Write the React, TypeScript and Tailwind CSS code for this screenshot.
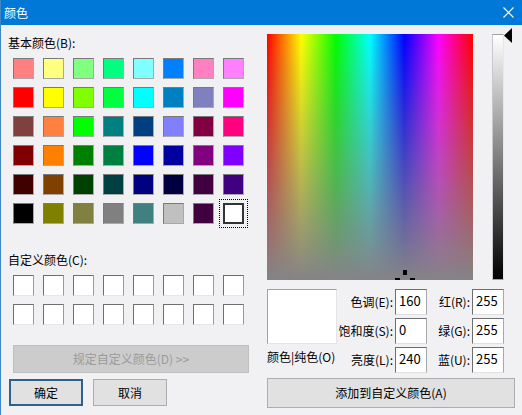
const basicColors = [
  "#ff8080", "#ffff80", "#80ff80", "#00ff80", "#80ffff", "#0080ff", "#ff80c0", "#ff80ff",
  "#ff0000", "#ffff00", "#80ff00", "#00ff40", "#00ffff", "#0080c0", "#8080c0", "#ff00ff",
  "#804040", "#ff8040", "#00ff00", "#008080", "#004080", "#8080ff", "#800040", "#ff0080",
  "#800000", "#ff8000", "#008000", "#008040", "#0000ff", "#0000a0", "#800080", "#8000ff",
  "#400000", "#804000", "#004000", "#004040", "#000080", "#000040", "#400040", "#400080",
  "#000000", "#808000", "#808040", "#808080", "#408080", "#c0c0c0", "#400040", "#ffffff",
]

const fields = [
  { label: "色调(E):", value: "160", label2: "红(R):", value2: "255" },
  { label: "饱和度(S):", value: "0", label2: "绿(G):", value2: "255" },
  { label: "亮度(L):", value: "240", label2: "蓝(U):", value2: "255" },
]

function Swatch({ color, selected }: { color: string; selected?: boolean }) {
  if (selected) {
    return (
      <div className="w-[21px] h-[21px] outline-1 outline-dotted outline-black outline-offset-[3px]">
        <div className="w-full h-full border-2 border-[#333333]" style={{ backgroundColor: color }} />
      </div>
    )
  }
  return (
    <div
      className="w-[21px] h-[21px] border border-t-[#7a7a7a] border-l-[#7a7a7a] border-r-[#a8a8a8] border-b-[#a8a8a8]"
      style={{ backgroundColor: color }}
    />
  )
}

function ValueBox({ value }: { value: string }) {
  return (
    <div className="h-[26px] w-[32px] bg-white border border-t-[#6e6e6e] border-l-[#6e6e6e] border-r-[#a8a8a8] border-b-[#e0e0e0] pl-[3px] text-[13px] leading-[22px]">
      {value}
    </div>
  )
}

export default function App() {
  return (
    <div className="w-[522px] h-[415px] bg-[#f1f0f3] flex flex-col overflow-hidden text-black font-['Noto_Sans_CJK_SC','Noto_Sans',sans-serif] text-[12px] border-l border-[#3f86c4]">
      {/* Title bar */}
      <div className="h-[25px] shrink-0 bg-[#0078d7] flex items-center justify-between pl-[4px] pr-[8px] -ml-px">
        <span className="text-white text-[12px] leading-none">颜色</span>
        <svg width="11" height="11" viewBox="0 0 11 11" className="mt-[-1px]">
          <path d="M0.5 0.5 L10.5 10.5 M10.5 0.5 L0.5 10.5" stroke="#ffffff" strokeWidth="1.1" />
        </svg>
      </div>

      <div className="flex flex-1">
        {/* Left column */}
        <div className="w-[266px] shrink-0 flex flex-col">
          <div className="mt-[10px] pl-[7px] leading-[16px]">基本颜色(B):</div>
          <div className="mt-[7px] ml-[12px] grid grid-cols-[repeat(8,21px)] gap-x-[9px] gap-y-[8px]">
            {basicColors.map((c, i) => (
              <Swatch key={i} color={c} selected={i === basicColors.length - 1} />
            ))}
          </div>

          <div className="mt-[28px] pl-[7px] leading-[16px]">自定义颜色(C):</div>
          <div className="mt-[7px] ml-[12px] grid grid-cols-[repeat(8,21px)] gap-x-[9px] gap-y-[8px]">
            {Array.from({ length: 16 }).map((_, i) => (
              <div
                key={i}
                className="w-[21px] h-[21px] bg-white border border-t-[#6e6e6e] border-l-[#6e6e6e] border-r-[#9a9a9a] border-b-[#e6e6e6]"
              />
            ))}
          </div>

          <div className="mt-[20px] ml-[12px] w-[236px] h-[28px] bg-[#cccccc] border border-[#bfbfbf] flex items-center justify-center text-[#9b9b9b]">
            规定自定义颜色(D) &gt;&gt;
          </div>

          <div className="mt-[6px] ml-[8px] flex gap-[10px]">
            <div className="w-[74px] h-[27px] bg-[#e1e1e1] border-2 border-[#2c628b] flex items-center justify-center">
              确定
            </div>
            <div className="w-[74px] h-[27px] bg-[#e1e1e1] border border-[#adadad] flex items-center justify-center">
              取消
            </div>
          </div>
        </div>

        {/* Right column */}
        <div className="flex flex-col pt-[9px]">
          <div className="flex">
            <div className="relative w-[206px] h-[246px] bg-[linear-gradient(to_bottom,rgba(128,128,128,0),#858387),linear-gradient(to_right,#ff0000,#ffff00,#00ff00,#00ffff,#0000ff,#ff00ff,#ff0000)]">
              <div className="absolute left-[136px] top-[236px] w-[4px] h-[5px] bg-black" />
              <div className="absolute left-[128px] top-[244px] w-[5px] h-[2px] bg-black" />
              <div className="absolute left-[143px] top-[244px] w-[5px] h-[2px] bg-black" />
            </div>
            <div className="relative ml-[19px] w-[12px] h-[246px] border border-t-[#a0a0a0] border-l-[#c8c8c8] border-r-[#e8e8e8] border-b-[#a0a0a0] bg-[linear-gradient(to_bottom,#ffffff,#000000)]">
              <svg width="9" height="15" viewBox="0 0 9 15" className="absolute left-full top-[-7px] ml-[1px]">
                <path d="M8 0 L0 7.5 L8 15 Z" fill="#000000" />
              </svg>
            </div>
          </div>

          <div className="mt-[9px] grid grid-cols-[70px_58px_32px_45px_32px] grid-rows-[26px_26px_26px] gap-y-[3px] items-center leading-[16px]">
            <div className="row-span-2 self-stretch w-[70px] bg-white border border-t-[#a0a0a0] border-l-[#a0a0a0] border-r-[#e4e4e4] border-b-[#e4e4e4]" />
            {fields.map((f, i) => (
              <div key={i} className="contents">
                {i === 2 && <div className="self-start mt-[2px] whitespace-nowrap">颜色|纯色(O)</div>}
                <div className="text-right pr-[2px] whitespace-nowrap">{f.label}</div>
                <ValueBox value={f.value} />
                <div className="text-right pr-[2px] whitespace-nowrap">{f.label2}</div>
                <ValueBox value={f.value2} />
              </div>
            ))}
          </div>

          <div className="mt-[5px] w-[248px] h-[30px] bg-[#e1e1e1] border border-[#adadad] flex items-center justify-center">
            添加到自定义颜色(A)
          </div>
        </div>
      </div>
    </div>
  )
}
